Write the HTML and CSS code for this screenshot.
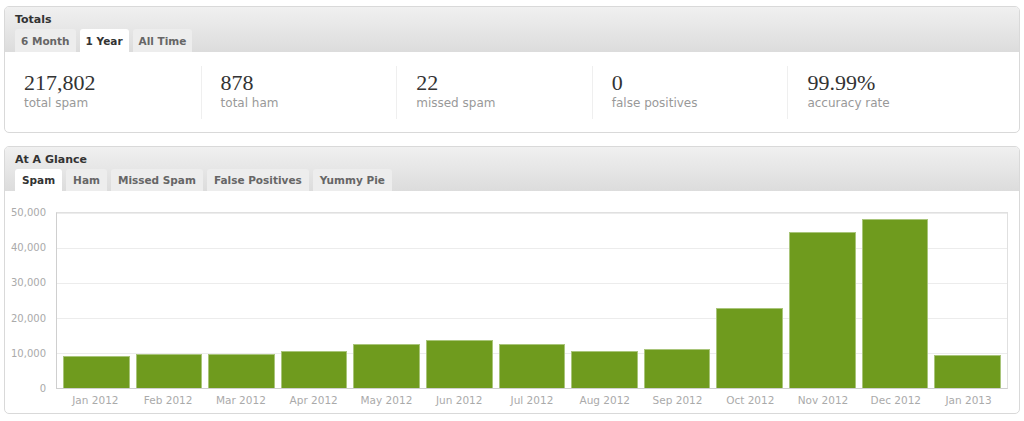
FILE: index.html
```html
<!DOCTYPE html>
<html>
<head>
<meta name="viewport" content="width=device-width, initial-scale=1">
<link rel="stylesheet" href="styles.css">
<title>Spam Stats</title>
</head>
<body>

<div class="panel totals">
    <div class="panel-head">
        <div class="panel-title">Totals</div>
        <div class="tabs">
            <span class="tab">6 Month</span>
            <span class="tab active">1 Year</span>
            <span class="tab">All Time</span>
        </div>
    </div>
    <div class="stats">
        <div class="stat"><div class="num">217,802</div><div class="lbl">total spam</div></div>
        <div class="stat"><div class="num">878</div><div class="lbl">total ham</div></div>
        <div class="stat"><div class="num">22</div><div class="lbl">missed spam</div></div>
        <div class="stat"><div class="num">0</div><div class="lbl">false positives</div></div>
        <div class="stat"><div class="num">99.99%</div><div class="lbl">accuracy rate</div></div>
    </div>
</div>

<div class="panel glance">
    <div class="panel-head">
        <div class="panel-title">At A Glance</div>
        <div class="tabs">
            <span class="tab active">Spam</span>
            <span class="tab">Ham</span>
            <span class="tab">Missed Spam</span>
            <span class="tab">False Positives</span>
            <span class="tab">Yummy Pie</span>
        </div>
    </div>
    <div class="chart">
        <div class="y-axis">
            <span>50,000</span>
            <span>40,000</span>
            <span>30,000</span>
            <span>20,000</span>
            <span>10,000</span>
            <span>0</span>
        </div>
        <div class="plot" id="plot"></div>
        <div></div>
        <div class="x-axis" id="xaxis"></div>
    </div>
</div>

<script>
    // monthly spam counts
    var months = [
        ["Jan 2012", 8800], ["Feb 2012", 9400], ["Mar 2012", 9400],
        ["Apr 2012", 10200], ["May 2012", 12200], ["Jun 2012", 13400],
        ["Jul 2012", 12200], ["Aug 2012", 10200], ["Sep 2012", 10800],
        ["Oct 2012", 22700], ["Nov 2012", 44300], ["Dec 2012", 48000],
        ["Jan 2013", 9100]
    ];
    var max = 50000;
    var plot = document.getElementById("plot");
    var xaxis = document.getElementById("xaxis");

    for (var i = 0; i < months.length; i++) {
        const slot = document.createElement("div");
        slot.className = "slot";
        const bar = document.createElement("div");
        bar.className = "bar";
        bar.style.height = (months[i][1] / max * 100) + "%";
        slot.appendChild(bar);
        plot.appendChild(slot);

        const label = document.createElement("span");
        label.textContent = months[i][0];
        xaxis.appendChild(label);
    }
</script>

</body>
</html>
```

FILE: styles.css
```css
body {
    margin: 0;
    background-color: #ffffff;
    font-family: "DejaVu Sans", Verdana, sans-serif;
}

.panel {
    margin: 6px 4px 0 4px;
    border: 1px solid #d9d9d9;
    border-radius: 5px;
    background-color: white;
    overflow: hidden;
}

.glance {
    margin-top: 13px;
}

.panel-head {
    background-image: linear-gradient(#f0f0f0, #dcdcdc);
    padding: 5px 0 0 10px;
}

.panel-title {
    font-size: 11px;
    font-weight: bold;
    color: #333;
    height: 17px;
    line-height: 16px;
}

.tabs {
    display: flex;
    gap: 4px;
}

.tab {
    font-size: 10.5px;
    font-weight: bold;
    color: #666;
    background-color: #ededed;
    border-radius: 3px 3px 0 0;
    padding: 0 6px;
    height: 23px;
    line-height: 24px;
}

.glance .tab {
    height: 22px;
    line-height: 23px;
    padding: 0 7px;
}

.tab.active {
    background-color: white;
    color: #333;
}

/* totals row */
.stats {
    display: grid;
    grid-template-columns: repeat(5, 195.6px);
    padding: 14px 0 13px 0;
}

.stat {
    padding: 5px 19px 0 19px;
    height: 48px;
    border-left: 1px solid #efefef;
}

.stat:first-child {
    border-left: none;
}

.num {
    font-family: "Liberation Serif", Georgia, serif;
    font-size: 22px;
    color: #333;
    height: 24px;
    line-height: 24px;
}

.lbl {
    font-size: 12px;
    color: #999;
    line-height: 16px;
}

/* chart */
.chart {
    display: grid;
    grid-template-columns: 51px 952px;
    padding: 21px 0 4px 0;
}

.y-axis {
    display: flex;
    flex-direction: column;
    justify-content: space-between;
    height: 177px;
    font-size: 10px;
    color: #aaa;
    padding-right: 10px;
}

.y-axis span {
    display: flex;
    align-items: center;
    justify-content: flex-end;
    height: 0;
}

.plot {
    display: flex;
    align-items: flex-end;
    height: 175px;
    border: 1px solid #e0e0e0;
    border-left-color: #cfcfcf;
    border-bottom-color: #cfcfcf;
    background-image: linear-gradient(#ececec 1px, transparent 1px);
    background-size: 100% 20%;
    padding: 0 3px;
}

.slot {
    flex: 1;
    height: 100%;
    display: flex;
    align-items: flex-end;
    padding: 0 3px;
}

.bar {
    flex: 1;
    background-color: #6f9b1e;
    border: 1px solid #a9c57a;
    border-bottom: none;
}

.x-axis {
    display: flex;
    padding: 0 3px;
    height: 20px;
    line-height: 22px;
    font-size: 10.5px;
    color: #aaa;
}

.x-axis span {
    flex: 1;
    text-align: center;
}
```
